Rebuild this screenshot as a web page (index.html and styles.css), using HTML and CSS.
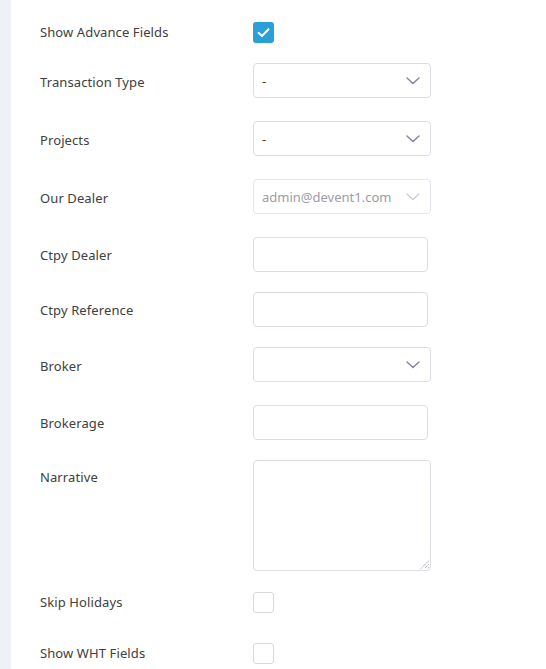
FILE: index.html
```html
<!DOCTYPE html>
<html>
<head>
<meta charset="utf-8">
<link rel="stylesheet" href="styles.css">
</head>
<body>
<div class="page">
  <div class="sidebar"></div>
  <div class="form">
    <div class="row gap-check chk">
      <div class="label">Show Advance Fields</div>
      <div class="checkbox checked">
        <svg width="21" height="21" viewBox="0 0 21 21"><path d="M5.5 10.8 L9 14 L15.5 7.2" fill="none" stroke="#fff" stroke-width="2" stroke-linecap="round" stroke-linejoin="round"/></svg>
      </div>
    </div>
    <div class="row gap-select sel">
      <div class="label">Transaction Type</div>
      <div class="select"><span class="value">-</span><svg class="chev" width="14" height="8" viewBox="0 0 14 8"><path d="M1 1 L7 6.5 L13 1" fill="none" stroke="#7b8596" stroke-width="1.4" stroke-linecap="round" stroke-linejoin="round"/></svg></div>
    </div>
    <div class="row gap-select sel">
      <div class="label">Projects</div>
      <div class="select"><span class="value">-</span><svg class="chev" width="14" height="8" viewBox="0 0 14 8"><path d="M1 1 L7 6.5 L13 1" fill="none" stroke="#7b8596" stroke-width="1.4" stroke-linecap="round" stroke-linejoin="round"/></svg></div>
    </div>
    <div class="row gap-select sel">
      <div class="label">Our Dealer</div>
      <div class="select disabled"><span class="value">admin@devent1.com</span><svg class="chev" width="14" height="8" viewBox="0 0 14 8"><path d="M1 1 L7 6.5 L13 1" fill="none" stroke="#c9ced6" stroke-width="1.4" stroke-linecap="round" stroke-linejoin="round"/></svg></div>
    </div>
    <div class="row gap-input">
      <div class="label">Ctpy Dealer</div>
      <div class="input"></div>
    </div>
    <div class="row gap-input">
      <div class="label">Ctpy Reference</div>
      <div class="input"></div>
    </div>
    <div class="row gap-select sel">
      <div class="label">Broker</div>
      <div class="select"><span class="value"></span><svg class="chev" width="14" height="8" viewBox="0 0 14 8"><path d="M1 1 L7 6.5 L13 1" fill="none" stroke="#7b8596" stroke-width="1.4" stroke-linecap="round" stroke-linejoin="round"/></svg></div>
    </div>
    <div class="row gap-input">
      <div class="label">Brokerage</div>
      <div class="input"></div>
    </div>
    <div class="row gap-textarea top">
      <div class="label narrative">Narrative</div>
      <div class="textarea">
        <svg class="grip" width="9" height="9" viewBox="0 0 9 9"><path d="M8.5 1 L1 8.5 M8.5 4.5 L4.5 8.5 M8.5 7.5 L7.5 8.5" stroke="#555" stroke-width="0.8" stroke-dasharray="1 1"/></svg>
      </div>
    </div>
    <div class="row gap-skip chk">
      <div class="label">Skip Holidays</div>
      <div class="checkbox"></div>
    </div>
    <div class="row chk">
      <div class="label">Show WHT Fields</div>
      <div class="checkbox"></div>
    </div>
  </div>
</div>
</body>
</html>
```
FILE: styles.css
```css
html, body {
  margin: 0;
  padding: 0;
  background: #ffffff;
}
body {
  font-family: "Segoe UI", "Noto Sans", "Open Sans", sans-serif;
  font-size: 13px;
  color: #404040;
}
.page {
  display: flex;
  min-height: 669px;
}
.sidebar {
  width: 11px;
  background: #eef2f6;
  flex: none;
}
.form {
  flex: 1;
  padding: 22px 0 0 29px;
  display: flex;
  flex-direction: column;
}
.row {
  display: grid;
  grid-template-columns: 213px auto;
  align-items: center;
}
.row.top {
  align-items: start;
}
.gap-check { margin-bottom: 20px; }
.gap-select { margin-bottom: 23px; }
.gap-input { margin-bottom: 20px; }
.gap-textarea { margin-bottom: 21px; }
.gap-skip { margin-bottom: 30px; }
.label {
  line-height: 18px;
  white-space: nowrap;
  letter-spacing: 0.1px;
}
.chk .label {
  padding-bottom: 2px;
}
.sel .label {
  padding-top: 2px;
}
.narrative {
  padding-top: 8px;
}
.checkbox {
  width: 19px;
  height: 19px;
  border: 1px solid #d6d9e2;
  border-radius: 3px;
  background: #fff;
}
.checkbox.checked {
  width: 21px;
  height: 21px;
  border: none;
  background: #2aa1d6;
}
.checkbox svg {
  display: block;
}
.select {
  box-sizing: border-box;
  width: 178px;
  height: 35px;
  border: 1px solid #dcdbe6;
  border-radius: 4px;
  display: flex;
  align-items: center;
  justify-content: space-between;
  padding: 0 10px 0 8px;
  background: #fff;
}
.select .value {
  color: #3a3a3a;
}
.select.disabled .value {
  color: #9c9ba8;
}
.select.disabled {
  border-color: #e6e5ee;
}
.chev {
  display: block;
}
.input {
  box-sizing: border-box;
  width: 175px;
  height: 35px;
  border: 1px solid #dcdbe6;
  border-radius: 4px;
  background: #fff;
}
.textarea {
  box-sizing: border-box;
  width: 178px;
  height: 111px;
  border: 1px solid #dcdbe6;
  border-radius: 4px;
  background: #fff;
  position: relative;
}
.grip {
  position: absolute;
  right: 1px;
  bottom: 1px;
}
```
